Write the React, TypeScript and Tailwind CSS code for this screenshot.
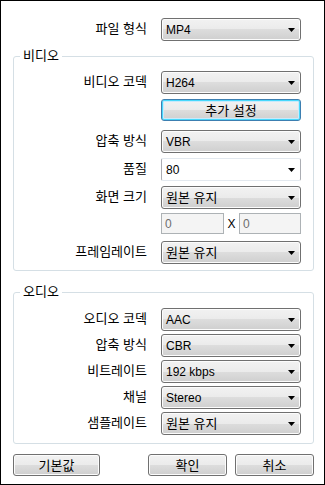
import React from "react";

const FONT = { fontFamily: '"Liberation Sans", "Noto Sans CJK KR", sans-serif' };

function Arrow() {
  return (
    <svg width="7" height="4" viewBox="0 0 7 4" className="shrink-0">
      <path d="M0 0 H7 L3.5 4 Z" fill="#000" />
    </svg>
  );
}

const isKo = (s: string) => /[\uac00-\ud7a3]/.test(s);

function Combo({ value, editable = false }: { value: string; editable?: boolean }) {
  const txt = isKo(value) ? "text-[13px]" : "text-[12px]";
  if (editable) {
    return (
      <div className={"w-[140px] h-[23px] flex items-center justify-between pl-[4px] pr-[5px] bg-white border border-[#abadb3] border-t-[#e3e9ef] border-b-[#e3e9ef] rounded-[2px] text-black " + txt}>
        <span className="leading-none">{value}</span>
        <Arrow />
      </div>
    );
  }
  return (
    <div className={"w-[140px] h-[23px] flex items-center justify-between pl-[4px] pr-[5px] border border-[#707070] rounded-[3px] bg-[linear-gradient(to_bottom,#f2f2f2_0%,#ebebeb_50%,#dddddd_50%,#cfcfcf_100%)] shadow-[inset_0_0_0_1px_#fcfcfc] text-black " + txt}>
      <span className="leading-none">{value}</span>
      <Arrow />
    </div>
  );
}

function Row({ label, children, inGroup = true, className = "" }: { label: string; children: React.ReactNode; inGroup?: boolean; className?: string }) {
  return (
    <div className={"flex items-center " + className}>
      <div className={(inGroup ? "w-[134px]" : "w-[135px]") + " text-right text-[13px] leading-none text-black pr-[1px] -mt-[2px]"}>{label}</div>
      <div className="ml-[13px]">{children}</div>
    </div>
  );
}

function Button({ label, width, focused = false }: { label: string; width: string; focused?: boolean }) {
  return (
    <div
      className={
        width +
        " h-[22px] flex items-center justify-center rounded-[3px] text-[13px] leading-none text-black bg-[linear-gradient(to_bottom,#f2f2f2_0%,#ebebeb_50%,#dddddd_50%,#cfcfcf_100%)] " +
        (focused
          ? "border border-[#3c7fb1] shadow-[inset_0_0_0_1px_#48d8fb,inset_0_0_0_2px_#c8eafc]"
          : "border border-[#707070] shadow-[inset_0_0_0_1px_#fcfcfc]")
      }
    >
      {label}
    </div>
  );
}

function Group({ title, children, className = "" }: { title: string; children: React.ReactNode; className?: string }) {
  return (
    <div className={"relative w-[301px] border border-[#d5dfe5] rounded-[3px] " + className}>
      <span className="absolute -top-[9px] left-[6px] bg-white px-[3px] text-[13px] leading-[15px] text-black">{title}</span>
      {children}
    </div>
  );
}

export default function App() {
  return (
    <div style={FONT} className="w-[325px] h-[485px] border border-black bg-white pl-[12px] pr-[10px] pt-[17px] box-border">
      <Row label="파일 형식" inGroup={false}>
        <Combo value="MP4" />
      </Row>

      <Group title="비디오" className="mt-[15px] pt-[14px] pb-[6px]">
        <Row label="비디오 코덱">
          <Combo value="H264" />
        </Row>
        <Row label="" className="mt-[5px]">
          <Button label="추가 설정" width="w-[140px]" focused />
        </Row>
        <Row label="압축 방식" className="mt-[9px]">
          <Combo value="VBR" />
        </Row>
        <Row label="품질" className="mt-[5px]">
          <Combo value="80" editable />
        </Row>
        <Row label="화면 크기" className="mt-[5px]">
          <Combo value="원본 유지" />
        </Row>
        <Row label="" className="mt-[4px]">
          <div className="flex items-center w-[140px] h-[21px]">
            <div className="w-[63px] h-[21px] border border-[#adb2b5] bg-[#f4f4f4] text-[#6d6d6d] text-[12px] leading-none flex items-center pl-[3px]">0</div>
            <div className="w-[15px] text-center text-[12px] leading-none text-black">X</div>
            <div className="w-[62px] h-[21px] border border-[#adb2b5] bg-[#f4f4f4] text-[#6d6d6d] text-[12px] leading-none flex items-center pl-[3px]">0</div>
          </div>
        </Row>
        <Row label="프레임레이트" className="mt-[7px]">
          <Combo value="원본 유지" />
        </Row>
      </Group>

      <Group title="오디오" className="mt-[21px] pt-[15px] pb-[8px]">
        <Row label="오디오 코덱">
          <Combo value="AAC" />
        </Row>
        <Row label="압축 방식" className="mt-[3px]">
          <Combo value="CBR" />
        </Row>
        <Row label="비트레이트" className="mt-[3px]">
          <Combo value="192 kbps" />
        </Row>
        <Row label="채널" className="mt-[3px]">
          <Combo value="Stereo" />
        </Row>
        <Row label="샘플레이트" className="mt-[3px]">
          <Combo value="원본 유지" />
        </Row>
      </Group>

      <div className="mt-[10px] flex w-[301px]">
        <Button label="기본값" width="w-[87px]" />
        <div className="ml-auto flex gap-[8px]">
          <Button label="확인" width="w-[79px]" />
          <Button label="취소" width="w-[79px]" />
        </div>
      </div>
    </div>
  );
}
